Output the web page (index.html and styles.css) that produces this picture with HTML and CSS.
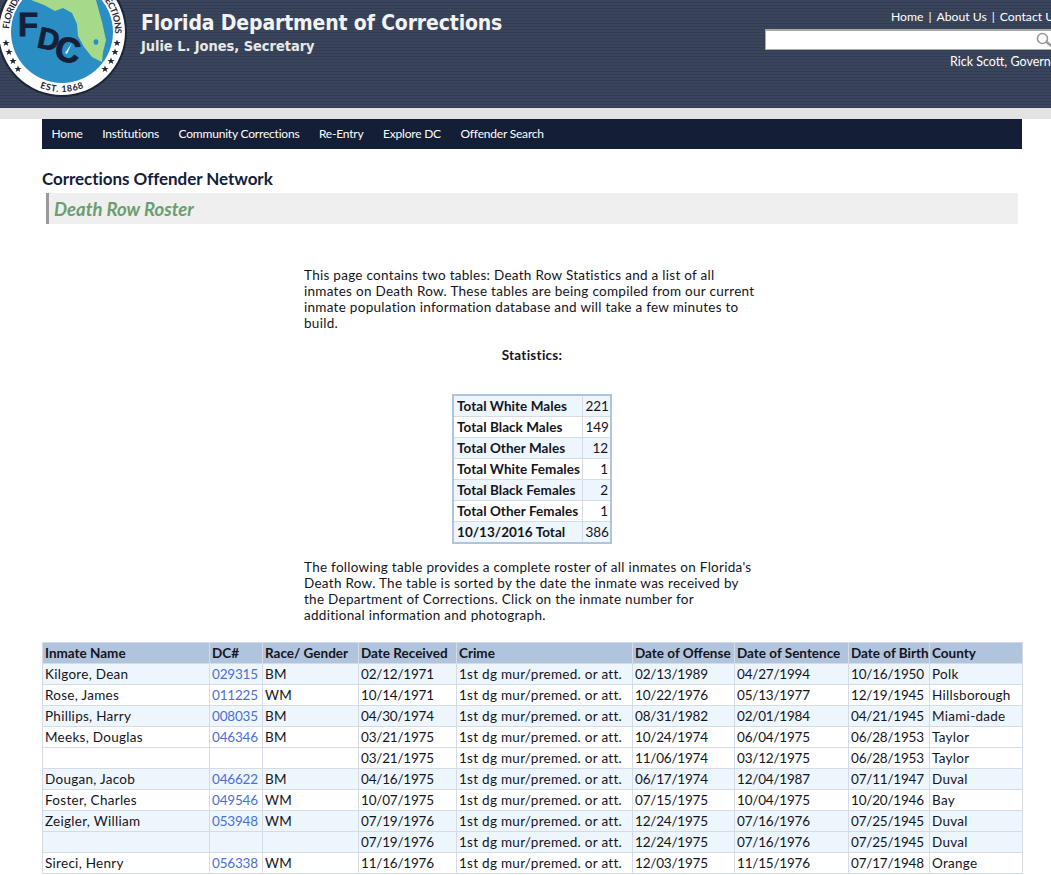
FILE: index.html
```html
<!DOCTYPE html>
<html lang="en">
    <head>
        <meta charset="utf-8">
        <title>Death Row Roster</title>
        <link rel="stylesheet" href="styles.css">
    </head>
    <body>
        <div class="top">
            <svg class="logo" width="127" height="100" viewBox="0 0 127 100">
                <defs>
                    <path id="arcTop" d="M 9 32 A 53 53 0 1 1 115 32"/>
                    <path id="arcBot" d="M 20 74.8 A 60 60 0 0 0 104 74.8"/>
                    <polygon id="star" points="0,-3.6 1,-1.1 3.6,-1.1 1.5,0.5 2.3,3.1 0,1.5 -2.3,3.1 -1.5,0.5 -3.6,-1.1 -1,-1.1"/>
                </defs>
                <circle cx="62" cy="32" r="65" fill="#1d2537"/>
                <circle cx="62" cy="32" r="63" fill="#fff"/>
                <circle cx="62" cy="32" r="51" fill="#2a8dc4"/>
                <polygon fill="#a6da8a" points="31,0 44,5 55,11 63,8 72,13 77,24 78,36 84,47 92,57 102,62 103,52 106,40 102,22 96,0"/>
                <ellipse cx="96" cy="42" rx="2.4" ry="2.8" fill="#2a8dc4"/>
                <g class="seal-text">
                    <text><textPath href="#arcTop" textLength="165" startOffset="3">FLORIDA DEPARTMENT OF CORRECTIONS</textPath></text>
                    <text class="seal-est"><textPath href="#arcBot" startOffset="50%" text-anchor="middle">EST. 1868</textPath></text>
                </g>
                <g fill="#1d2537">
                    <use href="#star" x="6" y="43"/>
                    <use href="#star" x="9" y="52"/>
                    <use href="#star" x="13" y="61"/>
                    <use href="#star" x="18" y="69"/>
                    <use href="#star" x="117" y="43"/>
                    <use href="#star" x="115" y="52"/>
                    <use href="#star" x="111" y="61"/>
                    <use href="#star" x="105" y="69"/>
                </g>
                <g class="seal-letters">
                    <text x="18" y="36" font-size="33">F</text>
                    <text transform="translate(36 47) rotate(12)" font-size="30">D</text>
                    <text transform="translate(53 59) rotate(12)" font-size="35">C</text>
                </g>
                <polygon points="72,43 65,53 67,54" fill="#dfeee8"/>
            </svg>
            <div class="agency">
                <div class="agency-name">Florida Department of Corrections</div>
                <div class="agency-sec">Julie L. Jones, Secretary</div>
            </div>
            <div class="topright">
                <div class="toplinks">Home<span class="sep">|</span>About Us<span class="sep">|</span>Contact Us</div>
                <div class="search">
                    <svg class="search-icon" width="18" height="16" viewBox="0 0 18 16">
                        <circle cx="6.5" cy="6.5" r="5" fill="none" stroke="#999" stroke-width="1.6"/>
                        <line x1="10.5" y1="10" x2="16" y2="14.5" stroke="#999" stroke-width="2.6"/>
                    </svg>
                </div>
                <div class="governor">Rick Scott, Governor</div>
            </div>
        </div>
        <div class="band"></div>

        <div class="wrap">
            <ul class="nav">
                <li>Home</li>
                <li>Institutions</li>
                <li>Community Corrections</li>
                <li>Re-Entry</li>
                <li>Explore DC</li>
                <li>Offender Search</li>
            </ul>

            <h1 class="net">Corrections Offender Network</h1>
            <h2 class="title">Death Row Roster</h2>

            <p class="intro">This page contains two tables: Death Row Statistics and a list of all inmates on Death Row. These tables are being compiled from our current inmate population information database and will take a few minutes to build.</p>

            <p class="stat-head">Statistics:</p>

            <table class="stats">
                <tr class="alt"><th>Total White Males</th><td>221</td></tr>
                <tr><th>Total Black Males</th><td>149</td></tr>
                <tr class="alt"><th>Total Other Males</th><td>12</td></tr>
                <tr><th>Total White Females</th><td>1</td></tr>
                <tr class="alt"><th>Total Black Females</th><td>2</td></tr>
                <tr><th>Total Other Females</th><td>1</td></tr>
                <tr class="alt"><th>10/13/2016 Total</th><td>386</td></tr>
            </table>

            <p class="intro outro">The following table provides a complete roster of all inmates on Florida's Death Row. The table is sorted by the date the inmate was received by the Department of Corrections. Click on the inmate number for additional information and photograph.</p>

            <table class="roster">
                <colgroup>
                    <col class="c-name"><col class="c-dc"><col class="c-race"><col class="c-recv"><col class="c-crime"><col class="c-off"><col class="c-sent"><col class="c-birth"><col class="c-county">
                </colgroup>
                <tr><th>Inmate Name</th><th>DC#</th><th>Race/ Gender</th><th>Date Received</th><th>Crime</th><th>Date of Offense</th><th>Date of Sentence</th><th>Date of Birth</th><th>County</th></tr>
                <tr class="alt"><td>Kilgore, Dean</td><td><a href="#">029315</a></td><td>BM</td><td>02/12/1971</td><td>1st dg mur/premed. or att.</td><td>02/13/1989</td><td>04/27/1994</td><td>10/16/1950</td><td>Polk</td></tr>
                <tr><td>Rose, James</td><td><a href="#">011225</a></td><td>WM</td><td>10/14/1971</td><td>1st dg mur/premed. or att.</td><td>10/22/1976</td><td>05/13/1977</td><td>12/19/1945</td><td>Hillsborough</td></tr>
                <tr class="alt"><td>Phillips, Harry</td><td><a href="#">008035</a></td><td>BM</td><td>04/30/1974</td><td>1st dg mur/premed. or att.</td><td>08/31/1982</td><td>02/01/1984</td><td>04/21/1945</td><td>Miami-dade</td></tr>
                <tr><td>Meeks, Douglas</td><td><a href="#">046346</a></td><td>BM</td><td>03/21/1975</td><td>1st dg mur/premed. or att.</td><td>10/24/1974</td><td>06/04/1975</td><td>06/28/1953</td><td>Taylor</td></tr>
                <tr><td></td><td></td><td></td><td>03/21/1975</td><td>1st dg mur/premed. or att.</td><td>11/06/1974</td><td>03/12/1975</td><td>06/28/1953</td><td>Taylor</td></tr>
                <tr class="alt"><td>Dougan, Jacob</td><td><a href="#">046622</a></td><td>BM</td><td>04/16/1975</td><td>1st dg mur/premed. or att.</td><td>06/17/1974</td><td>12/04/1987</td><td>07/11/1947</td><td>Duval</td></tr>
                <tr><td>Foster, Charles</td><td><a href="#">049546</a></td><td>WM</td><td>10/07/1975</td><td>1st dg mur/premed. or att.</td><td>07/15/1975</td><td>10/04/1975</td><td>10/20/1946</td><td>Bay</td></tr>
                <tr class="alt"><td>Zeigler, William</td><td><a href="#">053948</a></td><td>WM</td><td>07/19/1976</td><td>1st dg mur/premed. or att.</td><td>12/24/1975</td><td>07/16/1976</td><td>07/25/1945</td><td>Duval</td></tr>
                <tr class="alt"><td></td><td></td><td></td><td>07/19/1976</td><td>1st dg mur/premed. or att.</td><td>12/24/1975</td><td>07/16/1976</td><td>07/25/1945</td><td>Duval</td></tr>
                <tr><td>Sireci, Henry</td><td><a href="#">056338</a></td><td>WM</td><td>11/16/1976</td><td>1st dg mur/premed. or att.</td><td>12/03/1975</td><td>11/15/1976</td><td>07/17/1948</td><td>Orange</td></tr>
            </table>
        </div>
    </body>
</html>
```

FILE: styles.css
```css
*{margin:0;padding:0;box-sizing:border-box;}
ul{list-style:none;}
html,body{height:100%;}
body{background:#fff;color:#14141c;font-family:"Lato","Liberation Sans",sans-serif;font-size:13.5px;letter-spacing:.28px;overflow:hidden;}

/* header */
.top{display:flex;height:108px;overflow:hidden;color:#fff;letter-spacing:0;
    background:repeating-linear-gradient(180deg,#3a455c 0,#3a455c 2px,#323c52 2px,#323c52 3px);
}
.logo{flex:none;display:block;}
.seal-text{font-family:"Lato",sans-serif;font-size:9px;font-weight:700;fill:#1d2537;}
.seal-est{letter-spacing:.6px;}
.seal-letters{font-family:"Liberation Sans",sans-serif;font-weight:700;fill:#14203a;stroke:#14203a;stroke-width:.8px;}
.agency{flex:none;width:624px;margin-left:14px;padding-top:9px;font-family:"DejaVu Sans",sans-serif;font-stretch:condensed;font-weight:700;}
.agency-name{font-size:21px;letter-spacing:-.15px;line-height:29px;color:#f2f2f2;}
.agency-sec{font-size:14.5px;letter-spacing:-.05px;line-height:17px;color:#e8e8e8;}
.topright{flex:none;width:320px;padding-top:9px;font-size:12.5px;line-height:16px;white-space:nowrap;}
.toplinks{padding-left:126px;font-size:12.2px;}
.sep{margin:0 5px;}
.search{height:21px;width:100%;margin-top:4px;background:#fff;border:1px solid #aaa;border-top-width:2px;padding:1px 0 0 270px;}
.search-icon{display:block;}
.governor{margin-top:4px;padding-left:185px;}
.band{height:11px;background:#e3e3e3;}

/* page */
.wrap{width:980px;margin-left:42px;}
.nav{display:flex;height:30px;padding-left:9.5px;gap:19.5px;background:#141e36;color:#fff;font-size:12px;letter-spacing:-.2px;line-height:30px;}
.net{margin-top:20px;font-size:17px;letter-spacing:-.05px;line-height:20px;font-weight:700;color:#14203a;}
.title{height:31px;margin:4px 4px 0;padding-left:5px;background:#efefef;border-left:3px solid #999;color:#6b9e6e;font-size:18.5px;letter-spacing:0;font-style:italic;font-weight:700;line-height:32px;}
.intro{width:452px;margin:43px auto 0;line-height:16px;position:relative;left:-2px;}
.outro{margin-top:15px;}
.stat-head{margin-top:16px;text-align:center;font-weight:700;line-height:16px;}

/* tables */
table{border-collapse:collapse;}
.stats{table-layout:fixed;width:158px;margin:31px auto 0;border:2px solid #b0c4de;}
.stats th,.stats td{height:21px;border:1px solid #d5dce6;padding:1px 2px 0 3px;line-height:19px;white-space:nowrap;}
.stats th{width:129px;text-align:left;letter-spacing:.05px;}
.stats td{width:29px;text-align:right;letter-spacing:-.1px;}
.alt{background:#eef6fd;}

.roster{table-layout:fixed;width:980px;margin-top:19px;border:1px solid #d0d6e0;}
.roster th,.roster td{height:21px;border:1px solid #d5dce6;padding:0 2px;line-height:19px;text-align:left;white-space:nowrap;overflow:hidden;}
.roster th{background:#b0c4de;letter-spacing:0;}
.roster a{color:#4a6fd8;text-decoration:none;letter-spacing:-.2px;}
/* the dates run narrower than the names */
.roster td:nth-child(4),.roster td:nth-child(6),.roster td:nth-child(7),.roster td:nth-child(8){letter-spacing:-.2px;}
.c-name{width:167px;}
.c-dc{width:53px;}
.c-race{width:96px;}
.c-recv{width:98px;}
.c-crime{width:176px;}
.c-off{width:102px;}
.c-sent{width:114px;}
.c-birth{width:81px;}
.c-county{width:93px;}
```
